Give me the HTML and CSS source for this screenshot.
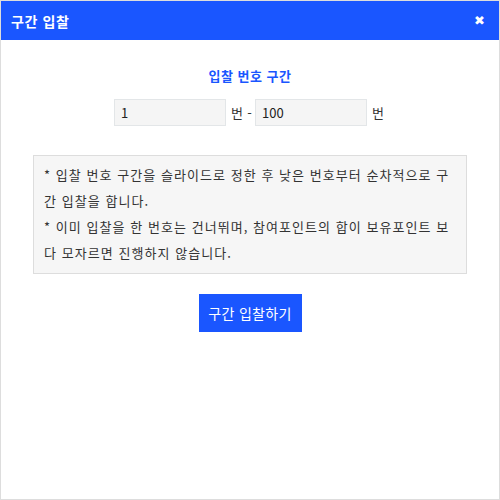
FILE: index.html
```html
<!DOCTYPE html>
<html lang="ko">
<head>
<meta charset="UTF-8">
<meta name="viewport" content="width=device-width,initial-scale=1">
<title>구간 입찰</title>
<link rel="stylesheet" href="styles.css">
</head>
<body>

<div class="dialog">
  <header class="dlg-head">
    <h1>구간 입찰</h1>
    <button class="close">✖</button>
  </header>

  <div class="dlg-body">
    <h2 class="range-title">입찰 번호 구간</h2>
    <div class="range-row">
      <input type="text" class="num" value="1">
      <span class="unit">번 -</span>
      <input type="text" class="num" value="100">
      <span class="unit">번</span>
    </div>

    <div class="notice">
      <p>* 입찰 번호 구간을 슬라이드로 정한 후 낮은 번호부터 순차적으로 구간 입찰을 합니다.</p>
      <p>* 이미 입찰을 한 번호는 건너뛰며, 참여포인트의 합이 보유포인트 보다 모자르면 진행하지 않습니다.</p>
    </div>

    <div class="actions"><button class="submit">구간 입찰하기</button></div>
  </div>
</div>

</body>
</html>
```

FILE: styles.css
```css
:root{
  --blue:#1a56ff;
  --line:#dddddd;
  --text:#333;
  font-family:"Noto Sans CJK KR","Noto Sans",sans-serif;
}
*{box-sizing:border-box;margin:0;padding:0}
body{background:#fff;width:500px;height:500px}

.dialog{width:500px;height:500px;border:1px solid var(--line);background:#fff}

/* ── header ── */
.dlg-head{background:var(--blue);height:39px;display:flex;align-items:center;padding:0 10px;color:#fff}
.dlg-head h1{font-size:14px;font-weight:700;margin-right:auto;letter-spacing:.6px}
.close{background:none;border:none;color:#fff;font-size:13px;cursor:pointer;margin-right:4px;font-family:"DejaVu Sans",sans-serif;font-weight:700}

/* ── body ── */
.dlg-body{padding:26px 32px 0}
.range-title{font-size:13px;font-weight:700;color:var(--blue);text-align:center;line-height:20px;letter-spacing:.5px}
.range-row{display:flex;align-items:center;margin-top:13px;padding-left:81px}
.num{width:112px;height:27px;border:1px solid #e3e6e8;background:#f5f5f5;padding:0 6px;font-size:13px;font-family:inherit;color:#222;outline:none}
.unit{font-size:13px;color:var(--text);margin:0 3px 0 5px;letter-spacing:.3px}

.notice{margin-top:29px;border:1px solid var(--line);background:#f6f6f6;padding:6px 12px 7px 10px;font-size:13px;line-height:26px;color:var(--text);letter-spacing:1.05px;word-break:break-all}

.actions{display:flex;justify-content:center;margin-top:20px}
.submit{background:var(--blue);color:#fff;border:none;width:103px;height:38px;font-size:14px;font-family:inherit;cursor:pointer;letter-spacing:.3px}
```
